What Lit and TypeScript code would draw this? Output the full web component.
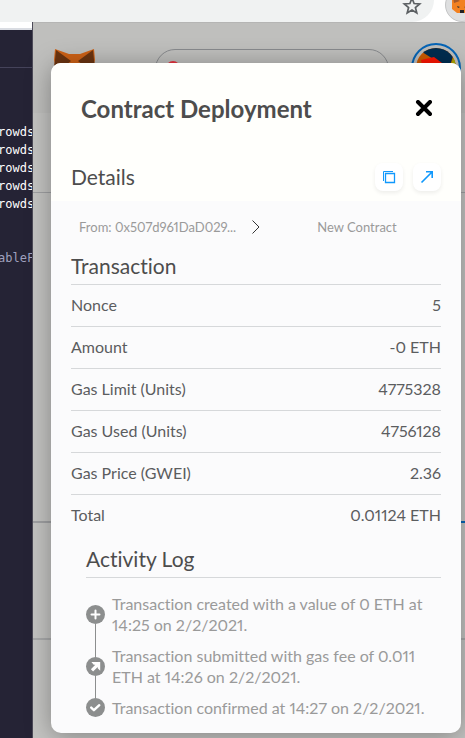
import { LitElement, html, css, svg } from "lit";
import { customElement } from "lit/decorators.js";

const ROWS = [
  ["Nonce", "5"],
  ["Amount", "-0 ETH"],
  ["Gas Limit (Units)", "4775328"],
  ["Gas Used (Units)", "4756128"],
  ["Gas Price (GWEI)", "2.36"],
  ["Total", "0.01124 ETH"],
];

const EVENTS = [
  {
    text: "Transaction created with a value of 0 ETH at 14:25 on 2/2/2021.",
    glyph: svg`<path d="M9.5 5.5v8M5.5 9.5h8" stroke="#fff" stroke-width="2" stroke-linecap="round"/>`,
  },
  {
    text: "Transaction submitted with gas fee of 0.011 ETH at 14:26 on 2/2/2021.",
    glyph: svg`<path d="M5.4 5h8.8v8.8l-2.5-2.5V10l-4.6 4.4-2.2-2.2L9.3 7.7H7.7z" fill="#fff"/>`,
  },
  {
    text: "Transaction confirmed at 14:27 on 2/2/2021.",
    glyph: svg`<path d="M5.2 9.6l2.7 2.6 5.4-5" stroke="#fff" stroke-width="2.4" stroke-linecap="round" stroke-linejoin="round" fill="none"/>`,
  },
];

const fox = svg`
  <path d="M1 0l14 5h11L40 0l1 11-3 12H3L0 11z" fill="#cd6116"/>
  <path d="M2 1l15 11-5 4-12 1 1-6zM39 1L24 12l5 4 12 1-1-6z" fill="#6b3410"/>`;

@customElement("app-root")
export class AppRoot extends LitElement {
  static styles = css`
    :host {
      display: flex;
      flex-direction: column;
      min-height: 100vh;
      overflow: hidden;
      font-family: Lato, "Liberation Sans", sans-serif;
      font-variant-ligatures: none;
      font-variant-numeric: proportional-nums;
      color: #5b5d5f;
    }
    * {
      box-sizing: border-box;
    }
    h1, h2, h3, p, ol, dl {
      margin: 0;
      padding: 0;
      font-weight: 400;
    }
    button {
      border: 0;
      padding: 0;
      background: none;
      display: grid;
      place-items: center;
    }
    svg {
      display: block;
    }
    .toolbar {
      display: flex;
      justify-content: space-between;
      height: 22px;
      background: #fff;
      overflow: hidden;
    }
    .address {
      flex: 1;
      display: flex;
      justify-content: flex-end;
      align-items: flex-start;
      height: 22px;
      padding-right: 12px;
      background: #f0f2f2;
      border-radius: 0 0 22px 0;
    }
    .star {
      margin-top: -4px;
    }
    .extension {
      width: 34px;
      height: 34px;
      margin: -12px -14px 0 11px;
      border-radius: 50%;
      background: #dedfe0;
      border: 1px solid #c4c5c6;
    }
    .main {
      flex: 1;
      display: flex;
    }
    .editor {
      width: 33px;
      flex: none;
      overflow: hidden;
      background: #252335;
      border-right: 1px solid #4c4a58;
      color: #fff;
    }
    .tabs {
      height: 46px;
      border-top: 6px solid #fff;
      border-bottom: 1px solid #45435a;
    }
    .tabs::before {
      content: "";
      display: block;
      height: 2px;
      background: #d9dce2;
    }
    .code {
      margin: 0 0 0 -2px;
      padding-top: 55px;
      font: 12px/18px "DejaVu Sans Mono", monospace;
    }
    .dim {
      color: #9fa0bd;
    }
    .popup {
      flex: 1;
      min-width: 0;
      display: grid;
    }
    .behind, .shade {
      grid-area: 1 / 1;
      min-width: 0;
    }
    .behind {
      background: #c4c4c2;
      display: flex;
      flex-direction: column;
    }
    .top {
      height: 91px;
      padding: 26px 4px 0 21px;
      display: flex;
      background: #bfbfbd;
      border-top: 1px solid #b5b5b4;
    }
    .network {
      flex: 1;
      height: 40px;
      margin: 0 22px 0 60px;
      border: 1px solid #898b8e;
      border-radius: 20px;
      padding: 11px 10px;
    }
    .dot {
      width: 14px;
      height: 14px;
      border-radius: 50%;
      background: #e8333f;
    }
    .account {
      width: 50px;
      height: 50px;
      margin-top: -6px;
    }
    .bar {
      height: 80px;
      border-bottom: 1px solid #a0a1a3;
    }
    .tabline {
      height: 330px;
      border-bottom: 2px solid #a0a1a3;
      border-image: linear-gradient(90deg, #a0a1a3 50%, #0665b7 50%) 1;
    }
    .item {
      height: 117px;
      border-bottom: 2px solid #a9aaab;
    }
    .shade {
      padding: 41px 4px 5px 18px;
    }
    .modal {
      background: #fbfbfc;
      border-radius: 10px;
      overflow: hidden;
      padding-bottom: 15px;
      box-shadow: 0 3px 26px rgba(0, 0, 0, 0.34);
    }
    .head {
      background: #fffffc;
      padding: 28px 20px 10px;
    }
    .title, .details {
      display: flex;
      align-items: center;
      justify-content: space-between;
    }
    .title {
      padding: 0 8px 0 10px;
      margin-bottom: 36px;
    }
    h1 {
      font-size: 24px;
      line-height: 36px;
      font-weight: 700;
      color: #4d4d4d;
    }
    h2 {
      font-size: 21px;
      line-height: 28px;
      color: #4d4d4d;
    }
    .actions {
      display: flex;
      gap: 10px;
    }
    .action {
      width: 28px;
      height: 28px;
      border-radius: 8px;
      background: #fff;
      box-shadow: 0 2px 4px rgba(0, 0, 0, 0.07);
    }
    .route {
      display: grid;
      grid-template-columns: minmax(0, 1fr) 10px minmax(0, 1fr);
      align-items: center;
      height: 51px;
      padding: 0 8px;
      font-size: 13px;
      color: #9a9a9a;
    }
    .from {
      padding-left: 20px;
      white-space: nowrap;
    }
    .to {
      text-align: center;
    }
    .section {
      padding: 0 20px;
    }
    .section h2 {
      border-bottom: 1px solid #d6d8da;
      padding-bottom: 4px;
    }
    .row {
      display: flex;
      justify-content: space-between;
      font-size: 16px;
      line-height: 40px;
      padding-bottom: 1px;
    }
    .row + .row {
      border-top: 1px solid #d6d8da;
    }
    dd {
      margin: 0;
    }
    .section.log {
      padding: 9px 20px 0 35px;
    }
    ol {
      list-style: none;
      padding-top: 15px;
      display: flex;
      flex-direction: column;
      gap: 10px;
    }
    li {
      display: flex;
      align-items: center;
      gap: 7px;
      font-size: 16px;
      line-height: 21px;
      color: #9a9a9a;
    }
    .step {
      flex: none;
      position: relative;
    }
    li:not(:last-child) .step::after {
      content: "";
      position: absolute;
      left: 9px;
      top: 19px;
      width: 1px;
      height: 34px;
      background: #8c8e8e;
    }
  `;

  render() {
    return html`
      <header class="toolbar">
        <div class="address">
          <button class="star" aria-label="Bookmark">
            <svg width="20" height="20" viewBox="0 0 20 20" fill="none" stroke="#5c6063" stroke-width="1.7"><path d="M10 2.2l2.1 5.3 5.6.4-4.3 3.6 1.4 5.5L10 14l-4.8 3 1.4-5.5-4.3-3.6 5.6-.4z"/></svg>
          </button>
        </div>
        <button class="extension" aria-label="Wallet">
          <svg width="20" height="20" viewBox="0 0 20 20"><path d="M0 0l7 3h6l7-3v14l-5 4H5l-5-4z" fill="#f28120"/><path d="M1 2l7 4-6 2z" fill="#a55a2a"/><path d="M5 11l3 1-2 1zM12 12l3-1-1 2z" fill="#333"/><path d="M8 15h4v3H8z" fill="#222"/></svg>
        </button>
      </header>
      <div class="main">
        <aside class="editor">
          <div class="tabs"></div>
          <pre class="code">rowds
rowds
rowds
rowds
rowds


<span class="dim">ableF</span></pre>
        </aside>
        <div class="popup">
          <div class="behind">
            <div class="top">
              <svg width="41" height="30" viewBox="0 0 41 30">${fox}</svg>
              <div class="network"><div class="dot"></div></div>
              <svg class="account" viewBox="0 0 50 50">
                <circle cx="25" cy="25" r="24" fill="none" stroke="#0665b7" stroke-width="2"/>
                <clipPath id="face"><circle cx="25" cy="25" r="20"/></clipPath>
                <g clip-path="url(#face)">
                  <path d="M0 0h50v50H0z" fill="#cf5c00"/>
                  <path d="M8 7L26 0h20L38 26z" fill="#002d50"/>
                  <path d="M44 10l8 2v20H36z" fill="#a9a800"/>
                  <path d="M10 17l13-3 16 12-26 4z" fill="#ff1500"/>
                </g>
              </svg>
            </div>
            <div class="bar"></div>
            <div class="tabline"></div>
            <div class="item"></div>
          </div>
          <div class="shade">
            <section class="modal" role="dialog" aria-labelledby="title">
              <div class="head">
                <div class="title">
                  <h1 id="title">Contract Deployment</h1>
                  <button aria-label="Close">
                    <svg width="18" height="18" viewBox="0 0 18 18" stroke="#000" stroke-width="4" stroke-linecap="round"><path d="M3 2l12 12M15 2L3 14"/></svg>
                  </button>
                </div>
                <div class="details">
                  <h2>Details</h2>
                  <div class="actions">
                    <button class="action" aria-label="Copy transaction ID">
                      <svg width="14" height="14" viewBox="0 0 14 14" fill="none" stroke="#1098fc"><path d="M1.5 11V1.5H11"/><path d="M3.5 3.5h9v9h-9z" stroke-width="1.3"/></svg>
                    </button>
                    <button class="action" aria-label="View on explorer">
                      <svg width="14" height="14" viewBox="0 0 14 14" fill="none" stroke="#1098fc" stroke-width="1.6"><path d="M1.5 12.5L12 2M6 1.8h6.2V8"/></svg>
                    </button>
                  </div>
                </div>
              </div>
              <div class="route">
                <span class="from">From: 0x507d961DaD029...</span>
                <svg width="10" height="14" viewBox="0 0 10 14" fill="none" stroke="#333"><path d="M1.5 .5L8 7l-6.5 6.5"/></svg>
                <span class="to">New Contract</span>
              </div>
              <div class="section">
                <h2>Transaction</h2>
                <dl>${ROWS.map(([k, v]) => html`<div class="row"><dt>${k}</dt><dd>${v}</dd></div>`)}</dl>
              </div>
              <div class="section log">
                <h2>Activity Log</h2>
                <ol>
                  ${EVENTS.map((e) => html`<li>
                    <span class="step"><svg width="19" height="19" viewBox="0 0 19 19"><circle cx="9.5" cy="9.5" r="9.5" fill="#8c8e8e"/>${e.glyph}</svg></span>
                    <p>${e.text}</p>
                  </li>`)}
                </ol>
              </div>
            </section>
          </div>
        </div>
      </div>
    `;
  }
}
